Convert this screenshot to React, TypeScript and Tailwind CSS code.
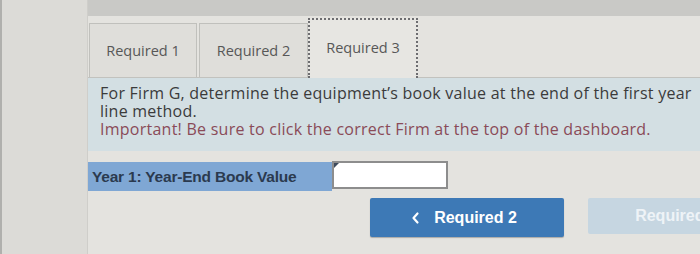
import React from 'react'

const TABS = [
  { label: 'Required 1', w: 'w-[108px]', active: false },
  { label: 'Required 2', w: 'w-[109px]', active: false },
  { label: 'Required 3', w: 'w-[110px]', active: true }
]

function Chevron({ dir }: { dir: 'left' | 'right' }) {
  return (
    <svg width="9" height="14" viewBox="0 0 9 14" className="shrink-0">
      <path
        d={dir === 'left' ? 'M6.5 2.5 L2.5 7 L6.5 11.5' : 'M2.5 2.5 L6.5 7 L2.5 11.5'}
        fill="none"
        stroke="currentColor"
        strokeWidth="2.2"
        strokeLinecap="round"
        strokeLinejoin="round"
      />
    </svg>
  )
}

export default function App() {
  return (
    <div className="flex w-[700px] h-[254px] overflow-hidden bg-[#e4e3df]">
      <div className="w-[88px] shrink-0 bg-[#dcdbd7] border-l-2 border-l-[#b0b0ad] border-r border-r-[#cfceca]" />

      <div className="flex-1 min-w-0 flex flex-col">
        <div className="h-[16px] bg-[#c9c9c6]" />

        {/* tabs */}
        <div className="h-[62px] flex items-end gap-[2px] pl-[1px] border-b border-[#c2c2be] font-['Open_Sans',sans-serif] text-[14.5px] text-[#575757]">
          {TABS.map(t =>
            t.active ? (
              <div
                key={t.label}
                className={`${t.w} h-[60px] -mb-px -ml-[2px] flex items-center justify-center pb-[3px] bg-[#e7e6e2] border-2 border-b-0 border-dotted border-[#6d6d70]`}
              >
                {t.label}
              </div>
            ) : (
              <div
                key={t.label}
                className={`${t.w} h-[54px] flex items-center justify-center bg-[#dfdeda] border border-b-0 border-[#c0c0bc]`}
              >
                {t.label}
              </div>
            )
          )}
        </div>

        {/* instructions */}
        <div className="h-[73px] bg-[#d3dfe3] pl-[12px] pt-[6px] font-['Open_Sans',sans-serif] text-[16px] tracking-[0.25px] leading-[18px] text-[#3b3b3b] whitespace-nowrap overflow-hidden">
          <div>For Firm G, determine the equipment’s book value at the end of the first year</div>
          <div>line method.</div>
          <div className="text-[#8a4b58]">Important! Be sure to click the correct Firm at the top of the dashboard.</div>
        </div>

        {/* answer row */}
        <div className="mt-[10px] flex items-start font-['Liberation_Sans',Arial,sans-serif]">
          <div className="w-[244px] h-[29px] mt-[1px] bg-[#7fa7d4] pl-[4px] flex items-center text-[15.5px] font-bold text-[#2b3a4f] tracking-[-0.2px]">
            Year 1: Year-End Book Value
          </div>
          <div className="relative w-[116px] h-[28px] bg-white border-2 border-[#8d8d8d]">
            <div className="absolute left-0 top-0 w-0 h-0 border-t-[5px] border-t-[#3d4a5c] border-r-[5px] border-r-transparent" />
          </div>
        </div>

        {/* nav buttons */}
        <div className="mt-[7px] pl-[282px] flex items-start gap-[24px] font-['Liberation_Sans',Arial,sans-serif] text-[16px] font-bold">
          <button className="w-[194px] h-[39px] shrink-0 rounded-[2px] bg-[#3d79b6] text-white flex items-center justify-center gap-[14px] pr-[6px] shadow-[0_1px_1px_rgba(0,0,0,0.25)]">
            <Chevron dir="left" />
            <span>Required 2</span>
          </button>
          <button className="w-[194px] h-[36px] shrink-0 rounded-[2px] bg-[#c6d6e1] text-[#eef3f7] flex items-center justify-center gap-[14px] pl-[6px]">
            <span>Required 3</span>
            <Chevron dir="right" />
          </button>
        </div>
      </div>
    </div>
  )
}
